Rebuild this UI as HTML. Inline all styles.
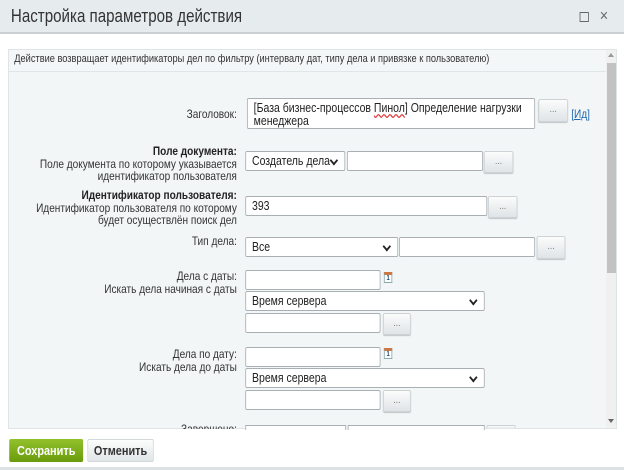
<!DOCTYPE html>
<html><head><meta charset="utf-8"><style>
*{box-sizing:border-box;margin:0;padding:0}
html,body{width:624px;height:470px;overflow:hidden;background:#fff;font-family:"Liberation Sans",Arial,sans-serif;color:#333}
#hdr{position:absolute;left:0;top:0;width:624px;height:34px;background:#e6ecee;border-bottom:2px solid #c9cfd2}
#panel{position:absolute;left:8px;top:49px;width:609px;height:380px;background:#f2f6f7;border:1px solid #dfe5e7;overflow:hidden}
#desc{position:absolute;left:0;top:0;width:597px;height:22px;border-bottom:1px solid #dfe6e8;background:#f3f7f8}
#sb{position:absolute;left:597px;top:0;width:11px;height:380px;background:#f0f0f0}
#thumb{position:absolute;left:1px;top:13px;width:9px;height:210px;background:#c2c2c2}
#w{position:absolute;left:0;top:0;width:743px;height:470px;transform:scale(0.84,1);transform-origin:0 0}
.a{position:absolute}
.lbl{position:absolute;right:461px;text-align:right;font-size:12px;line-height:12.5px;color:#333;white-space:nowrap}
.lbl b{color:#222}
.in{position:absolute;background:#fff;border:1px solid #a9b0b4;border-radius:2px;font-size:12.5px;padding:2px 7px;line-height:14px;color:#222;white-space:nowrap}
.sel:after{content:"";position:absolute;right:9px;top:5px;width:5px;height:5px;border-right:2px solid #222;border-bottom:2px solid #222;transform:rotate(45deg)}
.btn{position:absolute;background:linear-gradient(#fbfcfc,#dfe4e6);border:1px solid #cdd3d5;border-radius:2px;font-size:10px;color:#777;text-align:center;line-height:16px;box-shadow:0 1px 1px #c0c6c8}
.cal{position:absolute;width:10px;height:11px;border:1px solid #8aa;background:#fff;border-top:3px solid #c74;font-size:7px;line-height:7px;text-align:center;color:#247;font-weight:bold}
</style></head><body>
<div id="hdr"></div>
<div id="panel"><div id="desc"></div><div id="sb"><div id="thumb"></div>
<div class="a" style="left:2px;top:3px;width:0;height:0;border:3px solid transparent;border-bottom:4px solid #999;border-top:0"></div>
<div class="a" style="left:2px;top:369px;width:0;height:0;border:3px solid transparent;border-top:4px solid #666;border-bottom:0"></div></div></div>
<div id="w">
<div class="a" style="left:13px;top:6px;font-size:18px;color:#333">Настройка параметров действия</div>
<div class="a" style="left:690px;top:12px;width:11px;height:10px;border:1.5px solid #666"></div>
<div class="a" style="left:714px;top:6px;font-size:17px;color:#666">×</div>
<div class="a" style="left:17px;top:53px;font-size:11px;color:#333">Действие возвращает идентификаторы дел по фильтру (интервалу дат, типу дела и привязке к пользователю)</div>

<div class="lbl" style="top:108px">Заголовок:</div>
<div class="in" style="left:294px;top:98px;width:343px;height:31px;line-height:13px;padding-top:3px">[База бизнес-процессов <span style="text-decoration:underline wavy #d33">Пинол</span>] Определение нагрузки<br>менеджера</div>
<div class="btn" style="left:641px;top:99px;width:35px;height:23px;line-height:20px">...</div>
<div class="a" style="left:680px;top:107px;font-size:12px;color:#2067b0">[<u>Ид</u>]</div>

<div class="lbl" style="top:145px"><b>Поле документа:</b><br>Поле документа по которому указывается<br>идентификатор пользователя</div>
<div class="in sel" style="left:292px;top:151px;width:119px;height:20px">Создатель дела</div>
<div class="in" style="left:413px;top:151px;width:162px;height:20px"></div>
<div class="btn" style="left:576px;top:151px;width:35px;height:22px;line-height:19px">...</div>

<div class="lbl" style="top:189px"><b>Идентификатор пользователя:</b><br>Идентификатор пользователя по которому<br>будет осуществлён поиск дел</div>
<div class="in" style="left:292px;top:196px;width:288px;height:20px">393</div>
<div class="btn" style="left:581px;top:196px;width:35px;height:22px;line-height:19px">...</div>

<div class="lbl" style="top:235px">Тип дела:</div>
<div class="in sel" style="left:292px;top:237px;width:182px;height:20px">Все</div>
<div class="in" style="left:475px;top:237px;width:162px;height:20px"></div>
<div class="btn" style="left:639px;top:236px;width:34px;height:23px;line-height:20px">...</div>

<div class="lbl" style="top:270px">Дела с даты:<br>Искать дела начиная с даты</div>
<div class="in" style="left:292px;top:270px;width:161px;height:20px"></div>
<div class="cal" style="left:457px;top:272px">1</div>
<div class="in sel" style="left:292px;top:291px;width:285px;height:20px">Время сервера</div>
<div class="in" style="left:292px;top:313px;width:161px;height:20px"></div>
<div class="btn" style="left:456px;top:313px;width:33px;height:22px;line-height:19px">...</div>

<div class="lbl" style="top:348px">Дела по дату:<br>Искать дела до даты</div>
<div class="in" style="left:292px;top:347px;width:161px;height:20px"></div>
<div class="cal" style="left:457px;top:348px">1</div>
<div class="in sel" style="left:292px;top:368px;width:285px;height:20px">Время сервера</div>
<div class="in" style="left:292px;top:390px;width:161px;height:20px"></div>
<div class="btn" style="left:456px;top:390px;width:33px;height:22px;line-height:19px">...</div>

<div class="lbl" style="top:423px;height:6px;overflow:hidden">Завершено:</div>
<div class="in" style="left:292px;top:425px;width:120px;height:4px;border-bottom:0;border-radius:0"></div>
<div class="in" style="left:414px;top:425px;width:163px;height:4px;border-bottom:0;border-radius:0"></div>
<div class="btn" style="left:579px;top:425px;width:35px;height:4px;border-bottom:0;box-shadow:none"></div>

<div class="a" style="left:11px;top:439px;width:88px;height:23px;border-radius:2px;background:linear-gradient(#92c12c,#6a9b0c);color:#fff;font-weight:bold;font-size:13px;line-height:23px;text-align:center">Сохранить</div>
<div class="a" style="left:104px;top:439px;width:79px;height:23px;border-radius:2px;background:linear-gradient(#fcfdfd,#e0e5e7);border:1px solid #d3d8da;color:#333;font-weight:bold;font-size:13px;line-height:21px;text-align:center">Отменить</div>
</div>
<div class="a" style="left:0;top:467px;width:624px;height:3px;background:#dde2e4"></div>
</body></html>
